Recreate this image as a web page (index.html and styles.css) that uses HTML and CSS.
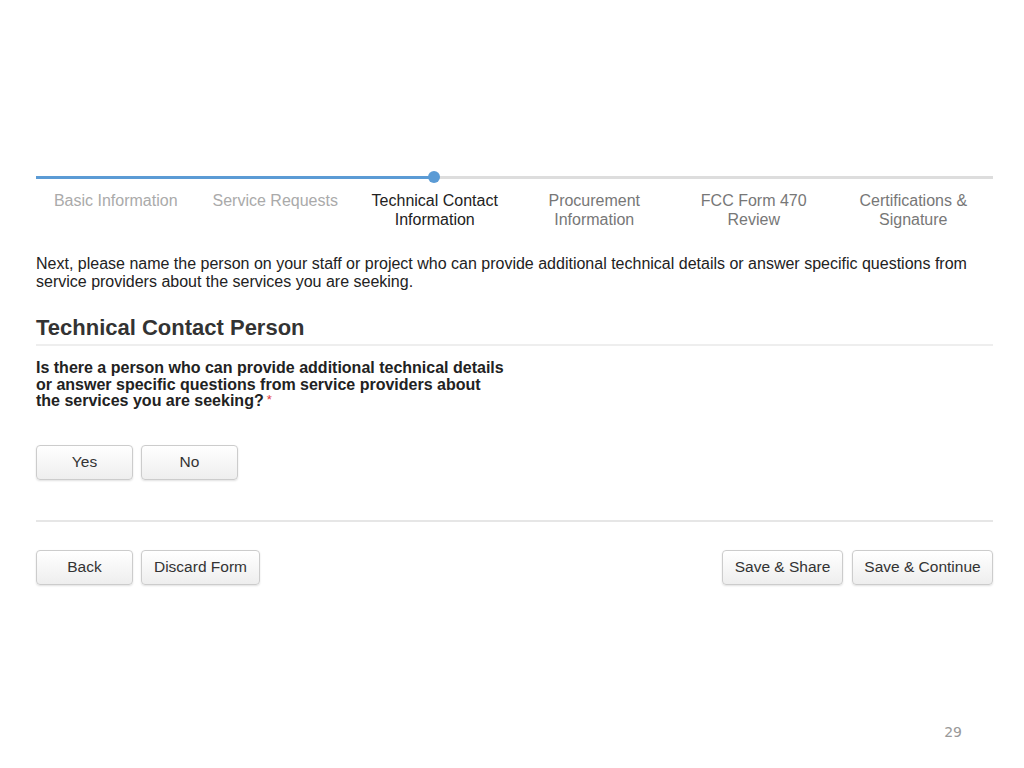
FILE: index.html
```html
<!DOCTYPE html>
<html lang="en">
<head>
    <meta charset="UTF-8">
    <title>Technical Contact Information</title>
    <link rel="stylesheet" href="styles.css">
</head>
<body>
    <div class="slide">
        <div class="wizard">
            <div class="progress">
                <div class="progress-fill"></div>
                <div class="progress-dot"></div>
            </div>
            <ul class="steps">
                <li class="step done">Basic Information</li>
                <li class="step done">Service Requests</li>
                <li class="step current">Technical Contact<br>Information</li>
                <li class="step">Procurement<br>Information</li>
                <li class="step">FCC Form 470<br>Review</li>
                <li class="step">Certifications &amp;<br>Signature</li>
            </ul>
        </div>

        <p class="intro">Next, please name the person on your staff or project who can provide additional technical details or answer specific questions from service providers about the services you are seeking.</p>

        <h2 class="section-title">Technical Contact Person</h2>

        <div class="question">Is there a person who can provide additional technical details or answer specific questions from service providers about the services you are seeking?<span class="required">*</span></div>

        <div class="choice">
            <button class="btn">Yes</button>
            <button class="btn">No</button>
        </div>

        <div class="actions">
            <div class="actions-left">
                <button class="btn">Back</button>
                <button class="btn btn-discard">Discard Form</button>
            </div>
            <div class="actions-right">
                <button class="btn btn-share">Save &amp; Share</button>
                <button class="btn btn-continue">Save &amp; Continue</button>
            </div>
        </div>
    </div>
    <div class="page-num">29</div>
</body>
</html>
```

FILE: styles.css
```css
body {
    margin: 0;
    font-family: 'Liberation Sans', Arial, sans-serif;
    color: #222;
    background: #fff;
    width: 1024px;
    height: 768px;
    position: relative;
}
.slide {
    margin-left: 36px;
    width: 957px;
    padding-top: 176px;
}
.progress {
    position: relative;
    height: 3px;
    background: #ddd;
}
.progress-fill {
    width: 398px;
    height: 3px;
    background: #5b9bd5;
}
.progress-dot {
    position: absolute;
    left: 392px;
    top: -5px;
    width: 12px;
    height: 12px;
    border-radius: 50%;
    background: #5b9bd5;
}
.steps {
    list-style: none;
    margin: 0;
    padding: 0;
    display: grid;
    grid-template-columns: repeat(6, 1fr);
    margin-top: 12px;
}
.step {
    text-align: center;
    font-size: 16px;
    line-height: 19px;
    color: #777;
}
.step.done {
    color: #aaa;
}
.step.current {
    color: #222;
}
.intro {
    margin: 26px 0 0;
    font-size: 16px;
    line-height: 18px;
    color: #222;
}
.section-title {
    margin: 24px 0 0;
    font-size: 22px;
    line-height: 26px;
    color: #333;
    padding-bottom: 3px;
    border-bottom: 2px solid #eee;
}
.question {
    margin-top: 14px;
    width: 469px;
    font-size: 16px;
    line-height: 16.5px;
    font-weight: bold;
    color: #222;
}
.required {
    color: #e0393e;
    font-weight: normal;
    margin-left: 3px;
    font-size: 13px;
    line-height: 0;
    vertical-align: 2px;
}
.choice {
    display: flex;
    gap: 8px;
    margin-top: 35px;
    padding-bottom: 40px;
    border-bottom: 2px solid #e6e6e6;
}
.btn {
    width: 97px;
    height: 35px;
    font-family: 'Liberation Sans', Arial, sans-serif;
    font-size: 15.5px;
    color: #333;
    background: linear-gradient(to bottom, #fff, #eee);
    border: 1px solid #ccc;
    border-radius: 4px;
    box-shadow: 0 1px 2px rgba(0,0,0,0.12);
    padding: 0;
}
.btn-discard {
    width: 119px;
}
.btn-share {
    width: 121px;
}
.btn-continue {
    width: 141px;
}
.actions {
    display: flex;
    justify-content: space-between;
    margin-top: 28px;
}
.actions-left {
    display: flex;
    gap: 8px;
}
.actions-right {
    display: flex;
    gap: 9px;
}
.page-num {
    position: absolute;
    right: 62px;
    top: 724px;
    font-family: 'DejaVu Sans', sans-serif;
    font-size: 14px;
    color: #999;
}
```
